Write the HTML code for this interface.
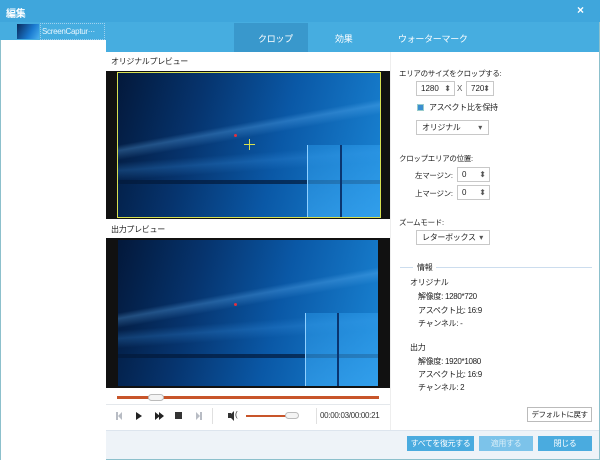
<!DOCTYPE html>
<html><head><meta charset="utf-8"><style>
*{margin:0;padding:0;box-sizing:border-box}
body{width:600px;height:460px;overflow:hidden;position:relative;background:#fff;font-family:"Liberation Sans","Noto Sans CJK JP",sans-serif;font-size:8px;color:#222}
.a{position:absolute;white-space:nowrap;letter-spacing:-0.3px}
.vid{position:absolute;overflow:hidden;background:
 linear-gradient(170deg,transparent 38%,rgba(110,190,255,.28) 41%,transparent 46%),
 linear-gradient(176deg,transparent 55%,rgba(60,150,230,.25) 60%,transparent 66%),
 linear-gradient(105deg,#03183a 0%,#06346e 30%,#0a58a6 60%,#1a86d6 100%);}
.vid .win{position:absolute;right:0;bottom:0;width:28%;height:50%;background:linear-gradient(160deg,rgba(40,150,230,.5),rgba(60,170,245,.7));}
.vid .win:before{content:"";position:absolute;left:44%;top:0;width:2px;height:100%;background:#0a3570}
.vid .win:after{content:"";position:absolute;left:0;top:0;width:1px;height:100%;background:#8fd0ff}
.vid .bar{position:absolute;left:0;right:0;height:4px;background:#031a3a;opacity:.7}
.spin{position:absolute;height:15px;border:1px solid #c8c8c8;background:#fff;font-size:8px;line-height:13px;padding-left:4px}
.spin:after{content:"⬍";position:absolute;right:3px;top:0;font-size:8px;color:#555}
.sel{position:absolute;height:15px;border:1px solid #c8c8c8;background:#fff;font-size:8px;line-height:13px;padding-left:5px;letter-spacing:-0.3px}
.sel:after{content:"▾";position:absolute;right:6px;top:0;color:#555}
.btn{position:absolute;height:15px;background:#4aabdf;color:#fff;font-size:8px;line-height:15px;text-align:center;letter-spacing:-0.4px;white-space:nowrap}
.tri{position:absolute;width:0;height:0;border-top:4px solid transparent;border-bottom:4px solid transparent;border-left:6px solid #222}
</style></head><body>
<div class="a" style="left:0;top:0;width:600px;height:22px;background:#3fa6dc"></div>
<div class="a" style="left:6px;top:5px;color:#fff;font-weight:bold;font-size:10px">編集</div>
<div class="a" style="left:577px;top:3px;color:#fff;font-weight:bold;font-size:12px">×</div>
<div class="a" style="left:0;top:22px;width:600px;height:30px;background:#46ade0"></div>
<div class="a" style="left:234px;top:23px;width:74px;height:29px;background:#3998cc"></div>
<div class="a" style="left:258px;top:32px;color:#fff;font-size:9px">クロップ</div>
<div class="a" style="left:335px;top:32px;color:#fff;font-size:9px">効果</div>
<div class="a" style="left:398px;top:32px;color:#fff;font-size:9px">ウォーターマーク</div>
<div class="a" style="left:0;top:40px;width:106px;height:420px;background:#fff;border-left:1px solid #8cc0cc"></div>
<div class="a" style="left:17px;top:24px;width:22px;height:15px;background:linear-gradient(120deg,#0a2a5a,#1a7ad0 60%,#4ab0f0)"></div>
<div class="a" style="left:40px;top:23px;width:65px;height:17px;border:1px dotted #9fd0ef;background:#46ade0;color:#e8f6ff;font-size:8px;line-height:15px;padding-left:1px;overflow:hidden">ScreenCaptur···</div>
<div class="a" style="left:106px;top:52px;width:494px;height:378px;background:#fff"></div>
<div class="a" style="left:111px;top:56px">オリジナルプレビュー</div>
<div class="a" style="left:106px;top:71px;width:284px;height:148px;background:#111"></div>
<div class="vid" style="left:117px;top:72px;width:264px;height:146px"><div class="bar" style="top:108px"></div><div class="win"></div></div>
<div class="a" style="left:117px;top:72px;width:264px;height:146px;border:1px solid #d8e050"></div>
<div class="a" style="left:244px;top:144px;width:11px;height:1px;background:#d8e050"></div>
<div class="a" style="left:249px;top:139px;width:1px;height:11px;background:#d8e050"></div>
<div class="a" style="left:234px;top:134px;width:3px;height:3px;border-radius:50%;background:#e03040"></div>
<div class="a" style="left:111px;top:224px">出力プレビュー</div>
<div class="a" style="left:106px;top:238px;width:284px;height:150px;background:#111"></div>
<div class="vid" style="left:118px;top:240px;width:260px;height:146px"><div class="bar" style="top:114px"></div><div class="win"></div></div>
<div class="a" style="left:234px;top:303px;width:3px;height:3px;border-radius:50%;background:#e03040"></div>
<div class="a" style="left:117px;top:396px;width:262px;height:3px;background:#c8552a"></div>
<div class="a" style="left:148px;top:394px;width:16px;height:7px;border:1px solid #bbb;border-radius:4px;background:#f4f4f4"></div>
<div class="a" style="left:106px;top:404px;width:284px;height:1px;background:#e4e8ec"></div>
<div class="a" style="left:116px;top:412px;width:2px;height:8px;background:#b8bcc4"></div>
<div class="tri" style="left:118px;top:412px;border-left:0;border-right:4px solid #b8bcc4"></div>
<div class="tri" style="left:136px;top:412px"></div>
<div class="tri" style="left:155px;top:412px;border-left-width:5px"></div>
<div class="tri" style="left:159px;top:412px;border-left-width:5px"></div>
<div class="a" style="left:175px;top:412px;width:7px;height:7px;background:#333"></div>
<div class="tri" style="left:196px;top:412px;border-left:4px solid #b8bcc4"></div>
<div class="a" style="left:200px;top:412px;width:2px;height:8px;background:#b8bcc4"></div>
<div class="a" style="left:212px;top:408px;width:1px;height:16px;background:#e0e0e0"></div>
<div class="a" style="left:228px;top:413px;width:3px;height:5px;background:#333"></div>
<div class="tri" style="left:229px;top:411px;border-left:0;border-right:5px solid #333;border-top-width:5px;border-bottom-width:5px"></div>
<div class="a" style="left:235px;top:410px;font-size:8px;color:#333">(</div>
<div class="a" style="left:246px;top:415px;width:44px;height:2px;background:#c8552a"></div>
<div class="a" style="left:285px;top:412px;width:14px;height:7px;border:1px solid #bbb;border-radius:4px;background:#f4f4f4"></div>
<div class="a" style="left:316px;top:408px;width:1px;height:16px;background:#e0e0e0"></div>
<div class="a" style="left:320px;top:411px;font-size:8px;color:#333">00:00:03/00:00:21</div>
<div class="a" style="left:390px;top:52px;width:1px;height:378px;background:#eee"></div>
<div class="a" style="left:399px;top:68px;font-size:7.5px">エリアのサイズをクロップする:</div>
<div class="spin" style="left:416px;top:81px;width:39px">1280</div>
<div class="a" style="left:457px;top:84px;font-size:8px;color:#555">X</div>
<div class="spin" style="left:466px;top:81px;width:28px">720</div>
<div class="a" style="left:417px;top:104px;width:7px;height:7px;background:#3b8fd0;border:1px solid #9cc"></div>
<div class="a" style="left:429px;top:102px">アスペクト比を保持</div>
<div class="sel" style="left:416px;top:120px;width:73px">オリジナル</div>
<div class="a" style="left:399px;top:153px;font-size:7.5px">クロップエリアの位置:</div>
<div class="a" style="left:415px;top:170px;font-size:7.5px">左マージン:</div>
<div class="spin" style="left:457px;top:167px;width:33px">0</div>
<div class="a" style="left:415px;top:188px;font-size:7.5px">上マージン:</div>
<div class="spin" style="left:457px;top:185px;width:33px">0</div>
<div class="a" style="left:399px;top:217px;font-size:7.5px">ズームモード:</div>
<div class="sel" style="left:416px;top:230px;width:74px">レターボックス</div>
<div class="a" style="left:400px;top:267px;width:192px;height:1px;background:#cde"></div>
<div class="a" style="left:413px;top:262px;padding:0 4px;background:#fff">情報</div>
<div class="a" style="left:410px;top:277px">オリジナル</div>
<div class="a" style="left:418px;top:291px">解像度: 1280*720</div>
<div class="a" style="left:418px;top:305px">アスペクト比: 16:9</div>
<div class="a" style="left:418px;top:318px">チャンネル: -</div>
<div class="a" style="left:410px;top:342px">出力</div>
<div class="a" style="left:418px;top:356px">解像度: 1920*1080</div>
<div class="a" style="left:418px;top:369px">アスペクト比: 16:9</div>
<div class="a" style="left:418px;top:382px">チャンネル: 2</div>
<div class="a" style="left:527px;top:407px;width:65px;height:15px;border:1px solid #bbb;background:#fff;font-size:7.5px;line-height:13px;text-align:center;letter-spacing:-0.5px">デフォルトに戻す</div>
<div class="a" style="left:106px;top:430px;width:494px;height:30px;background:#eef3f8;border-top:1px solid #dde5ee;border-bottom:1px solid #8cc0cc"></div>
<div class="btn" style="left:407px;top:436px;width:67px">すべてを復元する</div>
<div class="btn" style="left:479px;top:436px;width:54px;background:#7cc3ea;color:#d8eef8">適用する</div>
<div class="btn" style="left:538px;top:436px;width:54px">閉じる</div>
<div class="a" style="left:599px;top:22px;width:1px;height:438px;background:#8cc0cc"></div>
</body></html>
